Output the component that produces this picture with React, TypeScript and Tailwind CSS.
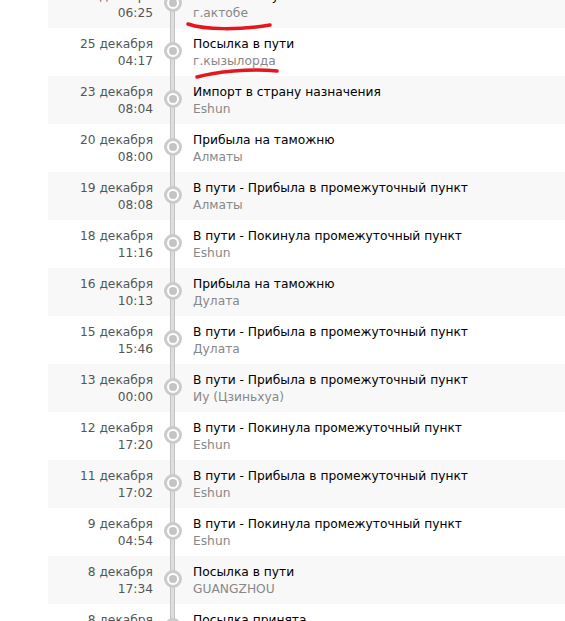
import React from 'react';

interface TrackEvent {
  date: string;
  time: string;
  status: string;
  place: string;
}

const events: TrackEvent[] = [
  { date: '27 декабря', time: '06:25', status: 'Посылка в пути', place: 'г.актобе' },
  { date: '25 декабря', time: '04:17', status: 'Посылка в пути', place: 'г.кызылорда' },
  { date: '23 декабря', time: '08:04', status: 'Импорт в страну назначения', place: 'Eshun' },
  { date: '20 декабря', time: '08:00', status: 'Прибыла на таможню', place: 'Алматы' },
  { date: '19 декабря', time: '08:08', status: 'В пути - Прибыла в промежуточный пункт', place: 'Алматы' },
  { date: '18 декабря', time: '11:16', status: 'В пути - Покинула промежуточный пункт', place: 'Eshun' },
  { date: '16 декабря', time: '10:13', status: 'Прибыла на таможню', place: 'Дулата' },
  { date: '15 декабря', time: '15:46', status: 'В пути - Прибыла в промежуточный пункт', place: 'Дулата' },
  { date: '13 декабря', time: '00:00', status: 'В пути - Прибыла в промежуточный пункт', place: 'Иу (Цзиньхуа)' },
  { date: '12 декабря', time: '17:20', status: 'В пути - Покинула промежуточный пункт', place: 'Eshun' },
  { date: '11 декабря', time: '17:02', status: 'В пути - Прибыла в промежуточный пункт', place: 'Eshun' },
  { date: '9 декабря', time: '04:54', status: 'В пути - Покинула промежуточный пункт', place: 'Eshun' },
  { date: '8 декабря', time: '17:34', status: 'Посылка в пути', place: 'GUANGZHOU' },
  { date: '8 декабря', time: '12:10', status: 'Посылка принята', place: 'GUANGZHOU' },
];

const Row: React.FC<{ ev: TrackEvent; shaded: boolean }> = ({ ev, shaded }) => (
  <div className={`flex h-[48px] ${shaded ? 'bg-[#f8f8f8]' : 'bg-white'}`}>
    <div className="w-[105px] shrink-0 pt-[8px] text-right leading-[17px] text-[#555]">
      <div>{ev.date}</div>
      <div>{ev.time}</div>
    </div>
    <div className="relative w-[40px] shrink-0">
      <div className="absolute left-[17px] top-0 h-full w-[5px] border-x border-[#c2c2c2] bg-[#dedede]" />
      <div className="absolute left-[11px] top-[14px] flex h-[18px] w-[18px] items-center justify-center rounded-full border-[3px] border-[#cbcbcb] bg-white">
        <div className="h-[8px] w-[8px] rounded-full bg-[#c4c4c4]" />
      </div>
    </div>
    <div className="pt-[8px] leading-[17px]">
      <div className="text-black">{ev.status}</div>
      <div className="text-[#888]">{ev.place}</div>
    </div>
  </div>
);

export default function App() {
  return (
    <div
      className="relative h-[621px] overflow-hidden bg-white pl-[48px] text-[12.25px]"
      style={{ fontFamily: '"DejaVu Sans", Verdana, sans-serif' }}
    >
      <div className="mt-[-20px]">
        {events.map((ev, i) => (
          <Row key={i} ev={ev} shaded={i % 2 === 0} />
        ))}
      </div>
      <svg className="pointer-events-none absolute left-0 top-0" width="565" height="621">
        <path d="M188 24 C205 30 240 30 270 25" stroke="#e5161d" strokeWidth="3.5" fill="none" strokeLinecap="round" />
        <path d="M197 77 C215 72 250 68 277 71" stroke="#e5161d" strokeWidth="3.5" fill="none" strokeLinecap="round" />
      </svg>
    </div>
  );
}
